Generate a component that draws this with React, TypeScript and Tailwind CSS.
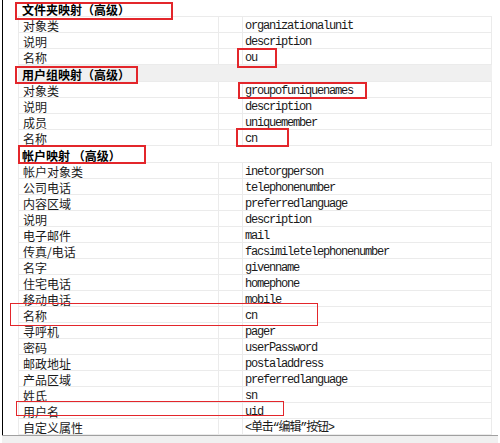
import React from 'react';

type Row = { label: string; value: string };
type Section = { title: string; shaded?: boolean; rows: Row[] };

const sections: Section[] = [
  {
    title: '文件夹映射（高级）',
    rows: [
      { label: '对象类', value: 'organizationalunit' },
      { label: '说明', value: 'description' },
      { label: '名称', value: 'ou' },
    ],
  },
  {
    title: '用户组映射（高级）',
    shaded: true,
    rows: [
      { label: '对象类', value: 'groupofuniquenames' },
      { label: '说明', value: 'description' },
      { label: '成员', value: 'uniquemember' },
      { label: '名称', value: 'cn' },
    ],
  },
  {
    title: '帐户映射 （高级）',
    rows: [
      { label: '帐户对象类', value: 'inetorgperson' },
      { label: '公司电话', value: 'telephonenumber' },
      { label: '内容区域', value: 'preferredlanguage' },
      { label: '说明', value: 'description' },
      { label: '电子邮件', value: 'mail' },
      { label: '传真/电话', value: 'facsimiletelephonenumber' },
      { label: '名字', value: 'givenname' },
      { label: '住宅电话', value: 'homephone' },
      { label: '移动电话', value: 'mobile' },
      { label: '名称', value: 'cn' },
      { label: '寻呼机', value: 'pager' },
      { label: '密码', value: 'userPassword' },
      { label: '邮政地址', value: 'postaladdress' },
      { label: '产品区域', value: 'preferredlanguage' },
      { label: '姓氏', value: 'sn' },
      { label: '用户名', value: 'uid' },
      { label: '自定义属性', value: '<单击“编辑”按钮>' },
    ],
  },
];

// red annotation boxes drawn over the grid
const marks = [
  'left-[15px] top-[2px] w-[158px] h-[18px] border-2',
  'left-[15px] top-[66px] w-[123px] h-[18px] border-2',
  'left-[18px] top-[145px] w-[128px] h-[19px] border-2',
  'left-[237px] top-[48px] w-[40px] h-[20px] border-2',
  'left-[238px] top-[82px] w-[129px] h-[17px] border-2',
  'left-[236px] top-[128px] w-[53px] h-[19px] border-2',
  'left-[10px] top-[303px] w-[308px] h-[23px] border-[1px]',
  'left-[16px] top-[401px] w-[268px] h-[15px] border-[1px]',
];

const cjk = "font-['Noto_Sans_CJK_SC',sans-serif]";
const mono = "font-['Liberation_Mono','Noto_Sans_CJK_SC',monospace] tracking-[-1.2px]";

export default function App() {
  return (
    <div className="relative w-[500px] h-[443px] bg-white overflow-hidden">
      <div className="ml-[2px] w-[495px] border-l border-black">
        {sections.map((s) => (
          <div key={s.title}>
            <div className="flex h-[17px]">
              <div className="w-[15px]" />
              <div
                className={`w-[474px] flex items-center pl-[4px] pt-[3px] border-b border-[#ebebeb] ${
                  s.shaded ? 'bg-[#f0f0f0]' : 'bg-white'
                }`}
              >
                <span className={`${cjk} text-[12px] font-bold leading-none text-black`}>{s.title}</span>
              </div>
            </div>
            {s.rows.map((r, i) => (
              <div key={i} className="flex h-[16px]">
                <div className="w-[15px]" />
                <div className="w-[474px] flex border-l border-r border-b border-[#ebebeb]">
                  <div className="w-[200px] flex items-center pl-[4px] pt-[2px] border-r border-[#ebebeb]">
                    <span className={`${cjk} text-[12px] leading-none text-[#1a1a1a]`}>{r.label}</span>
                  </div>
                  <div className="w-[24px] border-r border-[#ebebeb]" />
                  <div className="flex-1 flex items-center pl-[2px] pt-[2px]">
                    <span className={`${mono} text-[12px] leading-none text-[#1a1a1a] whitespace-pre`}>{r.value}</span>
                  </div>
                </div>
              </div>
            ))}
          </div>
        ))}
      </div>
      <div className="ml-[2px] w-[496px] h-[8px] border-t border-[#a0a0a0] bg-[#f0f0f0]" />
      {marks.map((m, i) => (
        <div key={i} className={`absolute ${m} border-solid border-[#e3262b] pointer-events-none`} />
      ))}
    </div>
  );
}
